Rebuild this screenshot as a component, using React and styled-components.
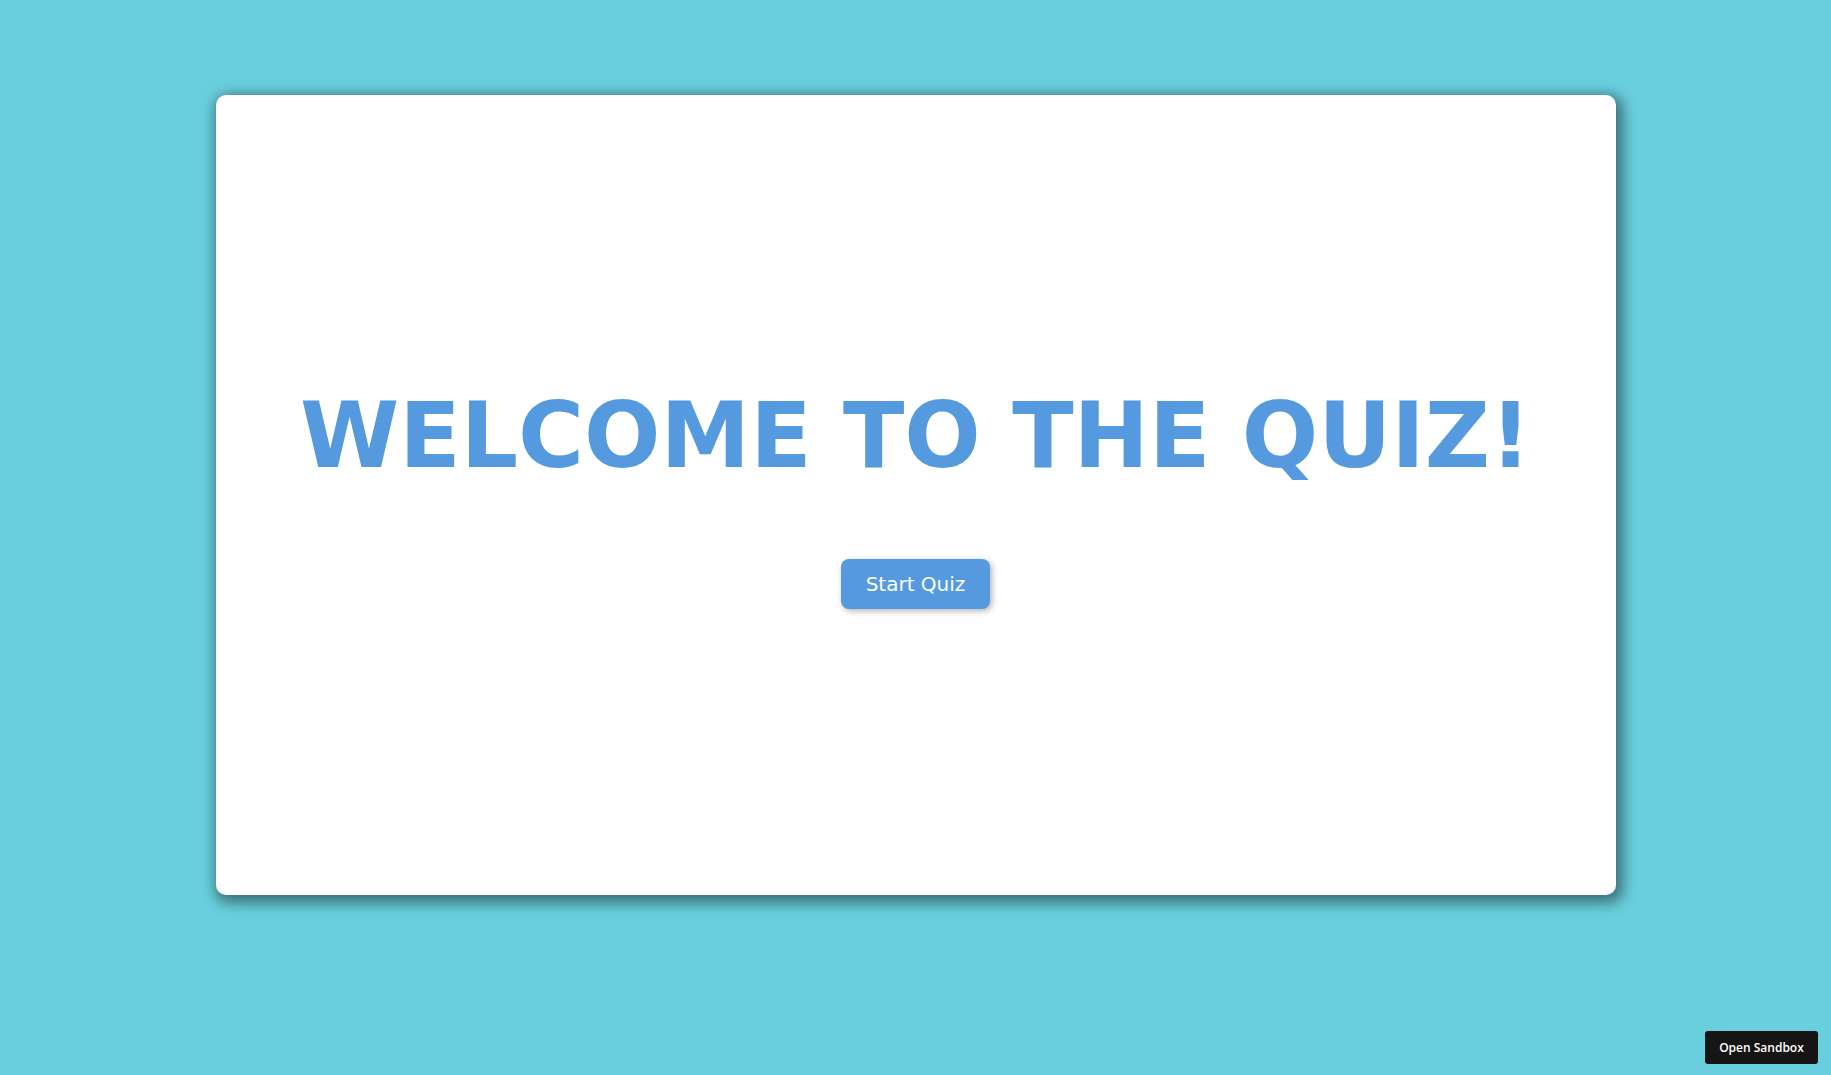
import styled, { createGlobalStyle } from "styled-components";

const GlobalStyle = createGlobalStyle`
  html, body {
    margin: 0;
    padding: 0;
    background: #69cfdd;
    font-family: "DejaVu Sans", sans-serif;
  }
`;

const Page = styled.div`
  min-height: 100vh;
  box-sizing: border-box;
  padding-top: 95px;
  display: flex;
  justify-content: center;
  align-items: flex-start;
`;

const Card = styled.div`
  width: 1400px;
  height: 800px;
  background: #ffffff;
  border-radius: 10px;
  box-shadow: 3px 4px 14px 4px rgba(0, 0, 0, 0.45);
  display: flex;
  flex-direction: column;
  align-items: center;
  justify-content: center;
`;

const Title = styled.h1`
  margin: 2px 0 71px;
  font-family: "DejaVu Sans", sans-serif;
  font-weight: bold;
  font-size: 90px;
  color: #559ade;
  text-align: center;
`;

const StartButton = styled.button`
  font-family: "DejaVu Sans", sans-serif;
  font-size: 20px;
  color: #ffffff;
  background: #559ade;
  border: none;
  border-radius: 8px;
  padding: 13px 25px;
  box-shadow: 2px 2px 6px rgba(0, 0, 0, 0.3);
  cursor: pointer;
`;

const SandboxLink = styled.a`
  position: fixed;
  right: 13px;
  bottom: 11px;
  width: 113px;
  height: 33px;
  display: flex;
  align-items: center;
  justify-content: center;
  background: #151515;
  color: #ffffff;
  border-radius: 3px;
  font-family: "Open Sans", sans-serif;
  font-weight: 600;
  font-size: 12px;
  text-decoration: none;
`;

export default function App() {
  return (
    <>
      <GlobalStyle />
      <Page>
        <Card>
          <Title>WELCOME TO THE QUIZ!</Title>
          <StartButton>Start Quiz</StartButton>
        </Card>
      </Page>
      <SandboxLink href="#">Open Sandbox</SandboxLink>
    </>
  );
}
